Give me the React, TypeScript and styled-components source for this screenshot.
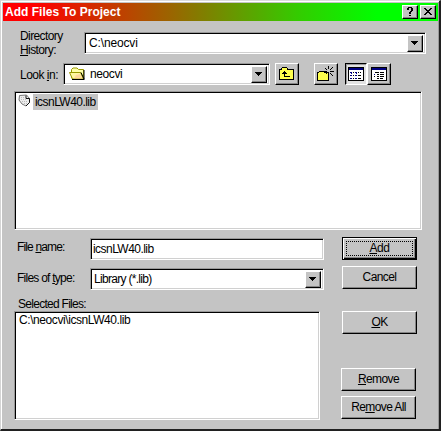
import React from "react";
import styled, { createGlobalStyle, css } from "styled-components";

const face = "#c4c4c4";

const GlobalStyle = createGlobalStyle`
  * { box-sizing: border-box; }
  body { margin: 0; background: ${face}; overflow: hidden; }
`;

const Dialog = styled.div`
  width: 441px;
  height: 431px;
  padding: 2px 1px 0 2px;
  background: ${face};
  border: solid;
  border-width: 1px 2px 2px 1px;
  border-color: #dcdcdc #202020 #202020 #d4d4d4;
  box-shadow: inset 1px 1px #fff, inset -1px 0 #999;
  font: 12px/14px "Liberation Sans", Arial, sans-serif;
  letter-spacing: -0.55px;
  color: #000;
  white-space: nowrap;
`;

const TitleBar = styled.header`
  display: flex;
  align-items: center;
  height: 18px;
  padding: 0 2px;
  background: linear-gradient(to right, #f00 0%, #f00 7%, #996600 39%, #33cc00 68%, #0f0 86%);
`;

const Title = styled.h1`
  flex: 1;
  margin: 0;
  color: #fff;
  font-size: 12px;
  line-height: 18px;
  letter-spacing: 0.02px;
`;

const raised = css`
  background: ${face};
  border: 1px solid;
  border-color: #fff #000 #000 #fff;
  box-shadow: inset -1px -1px #858585;
`;

const CaptionButton = styled.button`
  ${raised}
  display: grid;
  place-items: center;
  width: 16px;
  height: 14px;
  padding: 0;
  & + & { margin-left: 2px; }
`;

const Content = styled.main`
  padding: 11px 0 0 11px;
`;

const Row = styled.div<{ $gap?: number; $h?: number }>`
  display: flex;
  height: ${(p) => p.$h ?? 22}px;
  margin-top: ${(p) => p.$gap ?? 0}px;
`;

const Label = styled.label<{ $w: number; $left?: number; $top?: number; $spacing?: number }>`
  flex: none;
  width: ${(p) => p.$w}px;
  padding-left: ${(p) => p.$left ?? 0}px;
  padding-top: ${(p) => p.$top ?? 0}px;
  letter-spacing: ${(p) => p.$spacing ?? -0.5}px;
  line-height: 13px;
`;

const HistoryLabel = styled(Label)`
  margin-top: -3px;
  line-height: 14px;
`;

const Key = styled.span`
  text-decoration: underline;
  text-decoration-thickness: 1px;
  text-underline-offset: 1px;
  text-decoration-skip-ink: none;
`;

const sunken = css`
  background: #fff;
  border: 1px solid;
  border-color: #999 #fff #fff #999;
  box-shadow: inset 1px 1px #000, inset -1px -1px #d0d0d0;
`;

const Field = styled.div<{ $w: number; $left?: number }>`
  ${sunken}
  display: flex;
  align-items: center;
  flex: none;
  width: ${(p) => p.$w}px;
  height: 22px;
  padding: 1px 2px 1px ${(p) => p.$left ?? 3}px;
`;

const Value = styled.span<{ $spacing?: number; $left?: number }>`
  flex: 1;
  padding-left: ${(p) => p.$left ?? 0}px;
  letter-spacing: ${(p) => p.$spacing ?? -0.55}px;
`;

const DropButton = styled.button`
  ${raised}
  display: grid;
  place-items: center;
  width: 16px;
  height: 17px;
  padding: 0;
`;

const ToolButton = styled.button<{ $gap?: number; $pressed?: boolean }>`
  ${raised}
  display: grid;
  place-items: center;
  flex: none;
  width: ${(p) => (p.$pressed ? 22 : 24)}px;
  height: 22px;
  padding: 0;
  margin-left: ${(p) => p.$gap ?? 0}px;
  ${(p) =>
    p.$pressed &&
    css`
      background: #e2e2e2;
      border-color: #000 #fff #fff #000;
      box-shadow: inset 1px 1px #999;
    `}
`;

const ListBox = styled.div<{ $w: number; $h: number; $gap?: number }>`
  ${sunken}
  flex: none;
  width: ${(p) => p.$w}px;
  height: ${(p) => p.$h}px;
  margin-top: ${(p) => p.$gap ?? 0}px;
`;

const FileItem = styled.div`
  display: flex;
  align-items: flex-start;
  padding: 2px 0 0 3px;
`;

const FileName = styled.span`
  width: 65px;
  height: 16px;
  margin-left: 2px;
  padding-left: 2px;
  line-height: 16px;
  background: ${face};
`;

const SelectedFile = styled.div`
  padding: 1px 0 0 4px;
  letter-spacing: -0.42px;
`;

const Lower = styled.section`
  display: flex;
  margin-top: 7px;
`;

const Form = styled.div`
  width: 309px;
`;

const Actions = styled.div`
  padding-left: 19px;
`;

const PushButton = styled.button<{ $gap?: number; $shift?: number; $main?: boolean; $spacing?: number }>`
  ${raised}
  display: grid;
  place-items: center;
  width: 75px;
  height: 23px;
  padding: 0 0 1px;
  margin: ${(p) => p.$gap ?? 0}px 0 0 ${(p) => p.$shift ?? 0}px;
  font: inherit;
  letter-spacing: ${(p) => p.$spacing ?? -0.6}px;
  color: #000;
  ${(p) =>
    p.$main &&
    css`
      border-color: #000;
      box-shadow: inset 1px 1px #fff, inset -1px -1px #000, inset -2px -2px #858585;
      outline: 1px dotted #000;
      outline-offset: -5px;
    `}
`;

const Arrow = () => (
  <svg width="8" height="5" shapeRendering="crispEdges">
    <path d="M0 0h7v1H0zM1 1h5v1H1zM2 2h3v1H2zM3 3h1v1H3z" />
  </svg>
);

const HelpIcon = () => (
  <svg width="10" height="10" shapeRendering="crispEdges">
    <path d="M3 0h4v1H3zM2 1h2v2H2zM6 1h2v3H6zM5 4h2v1H5zM4 5h2v2H4zM4 8h2v1H4z" />
  </svg>
);

const CloseIcon = () => (
  <svg width="9" height="8" shapeRendering="crispEdges">
    <path d="M0 0h2v1H0zM6 0h2v1H6zM1 1h2v1H1zM5 1h2v1H5zM2 2h4v1H2zM3 3h2v1H3zM2 4h4v1H2zM1 5h2v1H1zM5 5h2v1H5zM0 6h2v1H0zM6 6h2v1H6z" />
  </svg>
);

const OpenFolderIcon = () => (
  <svg width="17" height="14">
    <path d="M2.5 11V2.5L4 1h4l1.5 1.5h5V11z" fill="#ffffa8" stroke="#999900" />
    <path d="M.5 5.5h11l3 6.5h-11z" fill="#fff7a0" stroke="#999900" />
    <path d="M7 8l4-1 2.5 4.5H5z" fill="#ffcc99" opacity=".75" />
    <path d="M12 5.5l3 6.5V3M3 12.5h12.5" fill="none" stroke="#000" />
  </svg>
);

const FileIcon = () => (
  <svg width="13" height="13">
    <path d="M1.5 1.5l7-.5 3 3.5v4L8 12 4 10 1 6z" fill="#ececec" stroke="#777" />
    <path d="M8 1.5v3h3.5v4L8 12" fill="none" stroke="#111" />
    <path d="M3 3.5h4M3 5.5h6M4 7.5h5M6 9.5h3" stroke="#bbb" strokeDasharray="1 1" />
  </svg>
);

const UpFolderIcon = () => (
  <svg width="16" height="14" shapeRendering="crispEdges">
    <path d="M.5 12.5v-10h2v-1l1-1h4l1 1v1h6v10z" fill="#ffff4d" stroke="#000" />
    <path d="M5 4h1v1H5zM4 5h3v1H4zM3 6h5v1H3zM5 7h1v3H5zM5 9h6v1H5z" />
  </svg>
);

const NewFolderIcon = () => (
  <svg width="18" height="16" shapeRendering="crispEdges">
    <path d="M.5 14.5v-8h1l1-1h4l1 1h4v8z" fill="#ffff4d" stroke="#000" />
    <path d="M11 0h1v3h-1zM8 2h1v1H8zM9 3h1v1H9zM14 2h1v1h-1zM15 1h1v1h-1zM13 3h1v1h-1zM7 5h3v1H7zM13 5h4v1h-4zM13 7h1v1h-1zM14 8h1v1h-1zM15 9h1v1h-1zM11 7h1v3h-1zM9 7h1v1H9z" />
  </svg>
);

const ListIcon = () => (
  <svg width="16" height="14" shapeRendering="crispEdges">
    <path d="M.5.5h15v13H.5z" fill="#fff" stroke="#000" />
    <path d="M1 1h14v2H1z" fill="#000080" />
    <path d="M2 5h2v1H2zM7 5h2v1H7zM12 5h1v1h-1zM2 8h2v1H2zM7 8h2v1H7zM2 11h2v1H2zM7 11h2v1H7zM3 6h1v1H3zM8 6h1v1H8z" fill="#000080" />
    <path d="M5 5h1v1H5zM10 5h1v1h-1zM12 5h1v1h-1zM5 8h1v1H5zM10 8h3v1h-3zM5 11h1v1H5zM10 11h3v1h-3z" />
  </svg>
);

const DetailsIcon = () => (
  <svg width="16" height="14" shapeRendering="crispEdges">
    <path d="M.5.5h15v13H.5z" fill="#fff" stroke="#000" />
    <path d="M1 1h14v2H1zM3 7h1v1H3z" fill="#000080" />
    <path d="M4 5h4v1H4zM9 5h4v1H9zM6 7h2v1H6zM9 7h4v1H9zM3 9h1v1H3zM6 9h2v1H6zM9 9h4v1H9zM6 11h2v1H6zM9 11h3v1H9z" />
  </svg>
);

export default function App() {
  return (
    <>
      <GlobalStyle />
      <Dialog>
        <TitleBar>
          <Title>Add Files To Project</Title>
          <CaptionButton><HelpIcon /></CaptionButton>
          <CaptionButton><CloseIcon /></CaptionButton>
        </TitleBar>
        <Content>
          <Row>
            <HistoryLabel $w={70} $left={6} $spacing={-0.6}>
              Directory<br /><Key>H</Key>istory:
            </HistoryLabel>
            <Field $w={342} $left={4}>
              <Value $spacing={-0.15}>C:\neocvi</Value>
              <DropButton><Arrow /></DropButton>
            </Field>
          </Row>
          <Row $gap={9}>
            <Label $w={49} $left={6} $top={6} $spacing={-0.5}>Look <Key>i</Key>n:</Label>
            <Field $w={207} $left={5}>
              <OpenFolderIcon />
              <Value $spacing={-0.4} $left={4}>neocvi</Value>
              <DropButton><Arrow /></DropButton>
            </Field>
            <ToolButton $gap={5}><UpFolderIcon /></ToolButton>
            <ToolButton $gap={15}><NewFolderIcon /></ToolButton>
            <ToolButton $gap={7} $pressed><ListIcon /></ToolButton>
            <ToolButton><DetailsIcon /></ToolButton>
          </Row>
          <ListBox $w={408} $h={139} $gap={6}>
            <FileItem><FileIcon /><FileName>icsnLW40.lib</FileName></FileItem>
          </ListBox>
          <Lower>
            <Form>
              <Row $gap={1}>
                <Label $w={76} $left={3} $top={3} $spacing={-0.85}>File <Key>n</Key>ame:</Label>
                <Field $w={234} $left={2}><Value>icsnLW40.lib</Value></Field>
              </Row>
              <Row $gap={8}>
                <Label $w={76} $left={3} $top={4} $spacing={-0.75}>Files of <Key>t</Key>ype:</Label>
                <Field $w={234} $left={3}>
                  <Value $spacing={-0.7}>Library (*.lib)</Value>
                  <DropButton><Arrow /></DropButton>
                </Field>
              </Row>
              <Row $h={21}>
                <Label $w={100} $left={4} $top={8} $spacing={-0.72}>Selected Files:</Label>
              </Row>
              <ListBox $w={306} $h={109}>
                <SelectedFile>C:\neocvi\icsnLW40.lib</SelectedFile>
              </ListBox>
            </Form>
            <Actions>
              <PushButton $main $spacing={-0.4}><span><Key>A</Key>dd</span></PushButton>
              <PushButton $gap={6}>Cancel</PushButton>
              <PushButton $gap={22}><span><Key>O</Key>K</span></PushButton>
              <PushButton $gap={34} $shift={-1}><span><Key>R</Key>emove</span></PushButton>
              <PushButton $gap={5} $shift={-1}><span>Re<Key>m</Key>ove All</span></PushButton>
            </Actions>
          </Lower>
        </Content>
      </Dialog>
    </>
  );
}
